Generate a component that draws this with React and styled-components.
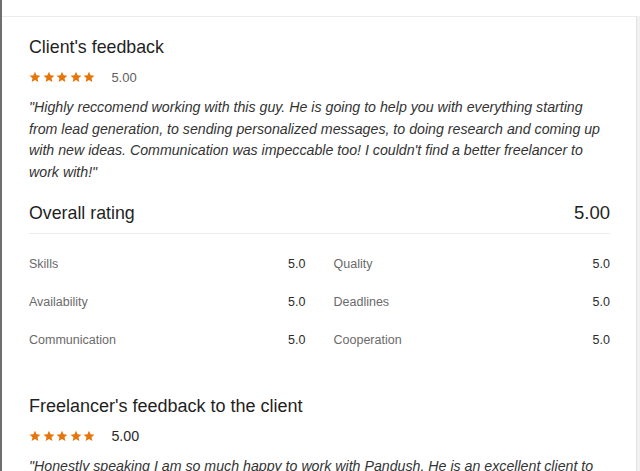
import React from 'react';
import styled, { createGlobalStyle } from 'styled-components';

const GlobalStyle = createGlobalStyle`
  html, body {
    margin: 0;
    padding: 0;
    background: #ffffff;
  }
  body {
    font-family: 'Liberation Sans', Arial, sans-serif;
    color: #222;
  }
`;

// Styled Components
const Page = styled.div`
  width: 640px;
  height: 471px;
  overflow: hidden;
  box-sizing: border-box;
  border-left: 2px solid #6e6e6e;
  padding-top: 16px;
  display: flex;
  background: #fff;
`;

const Card = styled.div`
  flex: 1;
  border-top: 1px solid #ebebeb;
  border-right: 1px solid #e2e2e2;
  padding: 19px 26px 0 27px;
  box-sizing: border-box;
`;

const ScrollTrack = styled.div`
  width: 3px;
  background: #f1f1f1;
`;

const Section = styled.section`
  margin-bottom: ${(props) => props.gap || '0'};
`;

const Title = styled.h2`
  margin: 0;
  font-size: ${(props) => props.size || '17.8px'};
  line-height: 22px;
  font-weight: 400;
  color: #1f1f1f;
`;

const RatingRow = styled.div`
  display: flex;
  align-items: center;
  gap: 16px;
  height: 16px;
  margin-top: 11px;
`;

const Stars = styled.div`
  display: flex;
  gap: 1.6px;
`;

const Score = styled.span`
  font-size: ${(props) => props.size || '13px'};
  color: ${(props) => props.color || '#5e5e5e'};
`;

const Quote = styled.p`
  margin: 12px 0 0;
  font-size: 14.2px;
  line-height: 21.7px;
  font-style: italic;
  color: #333;
`;

const OverallHeader = styled.div`
  display: flex;
  justify-content: space-between;
  align-items: center;
  margin-top: 18px;
  padding-bottom: 9px;
  border-bottom: 1px solid #ececec;
`;

const OverallValue = styled.span`
  font-size: 18.5px;
  line-height: 22px;
  color: #1f1f1f;
`;

const Grid = styled.div`
  display: grid;
  grid-template-columns: 1fr 1fr;
  column-gap: 28px;
  margin-top: 11px;
`;

const Metric = styled.div`
  display: flex;
  justify-content: space-between;
  align-items: center;
  height: 38px;
  font-size: 12.5px;
`;

const MetricLabel = styled.span`
  color: #6a6a6a;
`;

const MetricValue = styled.span`
  color: #2c2c2c;
`;

const Star = ({ size = 12 }) => (
  <svg width={size} height={size} viewBox="0 0 24 24">
    <path
      d="M12 1.5l3.1 7.1 7.7.7-5.8 5.1 1.7 7.6L12 18l-6.7 4 1.7-7.6L1.2 9.3l7.7-.7z"
      fill="#e4760b"
    />
  </svg>
);

const StarRating = () => (
  <Stars>
    {[0, 1, 2, 3, 4].map((i) => (
      <Star key={i} />
    ))}
  </Stars>
);

const metrics = [
  ['Skills', '5.0'],
  ['Quality', '5.0'],
  ['Availability', '5.0'],
  ['Deadlines', '5.0'],
  ['Communication', '5.0'],
  ['Cooperation', '5.0'],
];

// Component
const App = () => {
  return (
    <>
      <GlobalStyle />
      <Page>
        <Card>
          <Section>
            <Title>Client's feedback</Title>
            <RatingRow>
              <StarRating />
              <Score>5.00</Score>
            </RatingRow>
            <Quote>
              "Highly reccomend working with this guy. He is going to help you with everything starting from lead
              generation, to sending personalized messages, to doing research and coming up with new ideas.
              Communication was impeccable too! I couldn't find a better freelancer to work with!"
            </Quote>
          </Section>

          <Section gap="36px">
            <OverallHeader>
              <Title>Overall rating</Title>
              <OverallValue>5.00</OverallValue>
            </OverallHeader>
            <Grid>
              {metrics.map(([label, value]) => (
                <Metric key={label}>
                  <MetricLabel>{label}</MetricLabel>
                  <MetricValue>{value}</MetricValue>
                </Metric>
              ))}
            </Grid>
          </Section>

          <Section>
            <Title size="18px">Freelancer's feedback to the client</Title>
            <RatingRow>
              <StarRating />
              <Score size="14.3px" color="#2a2a2a">
                5.00
              </Score>
            </RatingRow>
            <Quote>
              "Honestly speaking I am so much happy to work with Pandush. He is an excellent client to work with,
              always clear about what he needs and quick to respond."
            </Quote>
          </Section>
        </Card>
        <ScrollTrack />
      </Page>
    </>
  );
};

export default App;
